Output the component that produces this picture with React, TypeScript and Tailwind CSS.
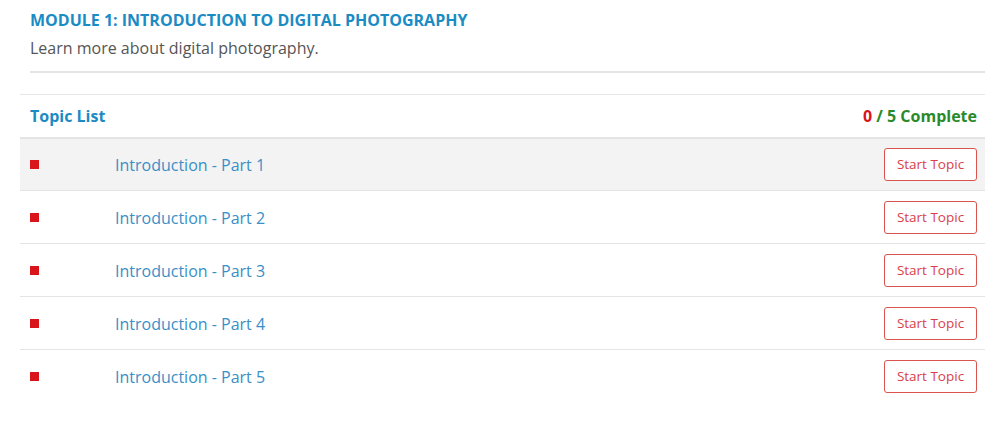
import { } from 'react';

const topics = [
  'Introduction - Part 1',
  'Introduction - Part 2',
  'Introduction - Part 3',
  'Introduction - Part 4',
  'Introduction - Part 5',
];

export default function App() {
  return (
    <div className="min-h-screen bg-white font-['Open_Sans',sans-serif]">
      <div className="ml-[20px] w-[965px] pt-[10px]">
        {/* Module header */}
        <div className="pl-[10px]">
          <h2 className="text-[16px] leading-[20px] font-bold text-[#1b8bc4] uppercase">
            Module 1: Introduction to Digital Photography
          </h2>
          <p className="mt-[7px] text-[16px] leading-[22px] text-[#555555]">Learn more about digital photography.</p>
          <div className="mt-[12px] h-[2px] bg-[#e4e4e4]" />
        </div>

        {/* Topic list */}
        <div className="mt-[21px] border-t border-[#e6e6e6]">
          <div className="flex h-[42px] items-center justify-between px-[10px]">
            <span className="text-[16px] font-bold text-[#1b8bc4]">Topic List</span>
            <span className="text-[16px] font-bold text-[#2a8a2a] -mr-[2px]">
              <span className="text-[#d9141b]">0</span> / 5 Complete
            </span>
          </div>
          {topics.map((t, i) => (
            <div
              key={t}
              className={`flex h-[53px] items-center border-t border-[#e4e4e4] px-[10px] ${i === 0 ? 'bg-[#f3f3f3] border-t-2' : ''}`}
            >
              <span className="block h-[9px] w-[9px] bg-[#d9141b]" />
              <a className="ml-[76px] pt-[1px] text-[16px] text-[#3a8fc7]">{t}</a>
              <button className="ml-auto -mr-[2px] h-[33px] w-[93px] rounded-[3px] border border-[#d9534f] bg-white text-[13.5px] text-[#d9414a]">
                Start Topic
              </button>
            </div>
          ))}
        </div>
      </div>
    </div>
  );
}
